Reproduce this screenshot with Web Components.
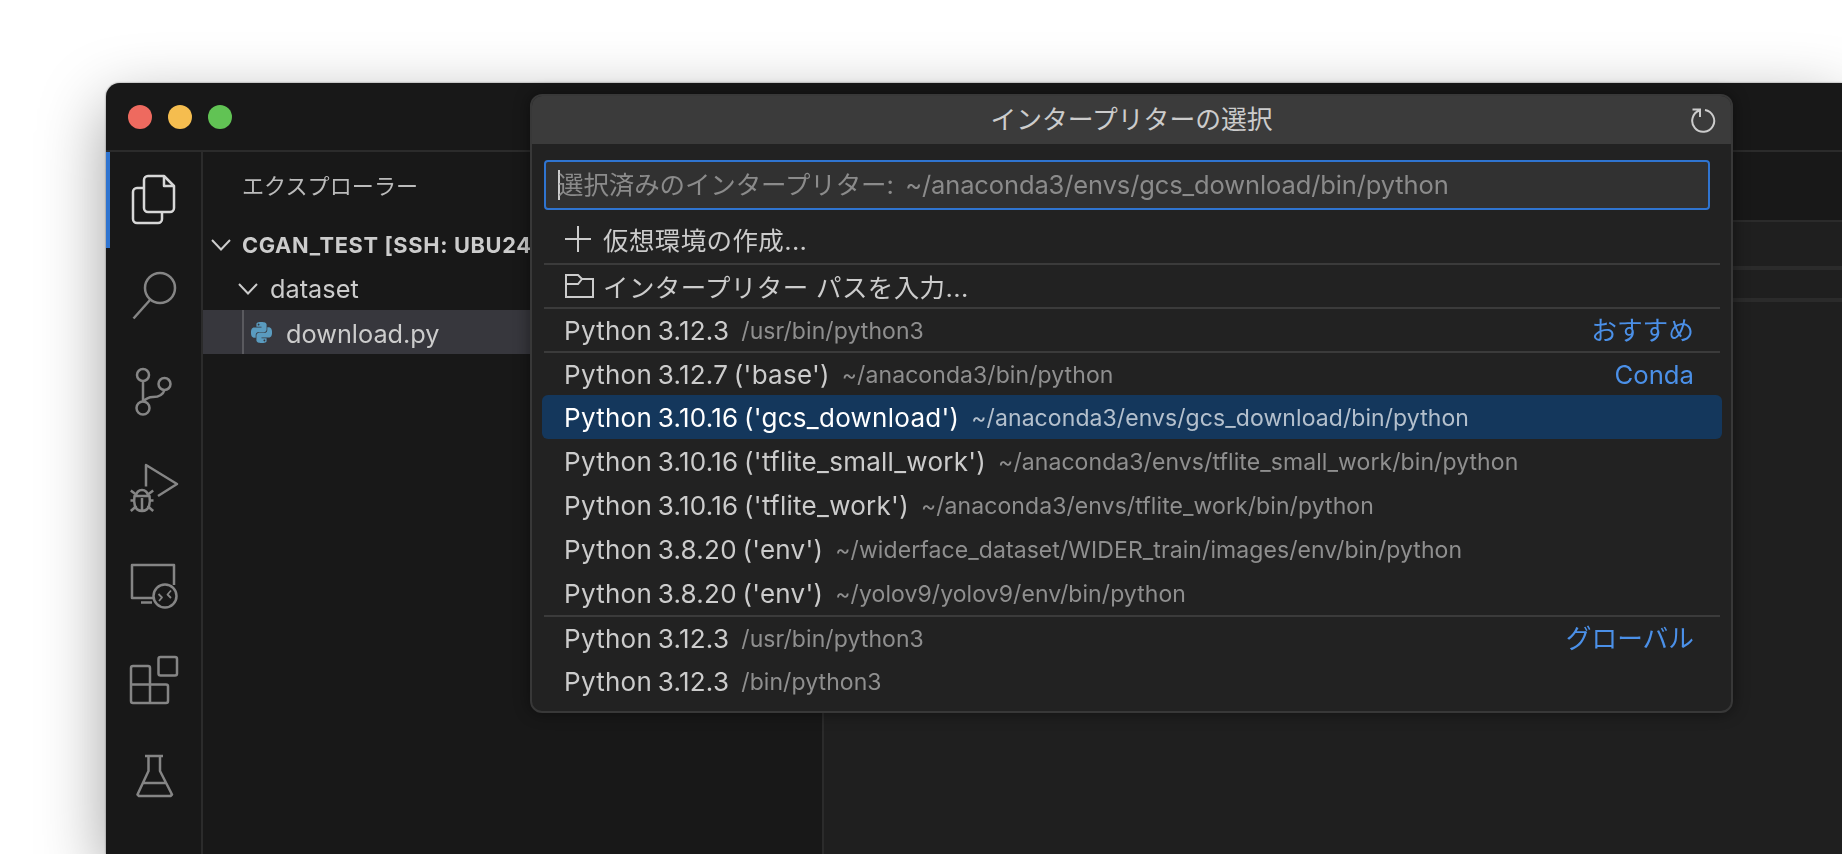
<!DOCTYPE html>
<html lang="ja">
<head>
<meta charset="utf-8">
<title>Python interpreter</title>
<style>
html,body{margin:0;height:100%;background:#fff;overflow:hidden}
body{font-family:Inter,"Noto Sans CJK JP",sans-serif;padding:83px 0 0 106px;box-sizing:border-box;color:#ccc}
</style>
</head>
<body>
<vs-window>
  <traffic-lights slot="title"></traffic-lights>
  <activity-bar slot="activity">
    <activity-item active><svg viewBox="0 0 96 96"><path d="M38 36H31a4 4 0 0 0-4 4V67a4 4 0 0 0 4 4H52a4 4 0 0 0 4-4V60"/><path d="M42 24H58L68 34V56a4 4 0 0 1-4 4H42a4 4 0 0 1-4-4V28a4 4 0 0 1 4-4Z"/><path d="M58 24V34H68"/></svg></activity-item>
    <activity-item><svg viewBox="0 0 96 96"><circle cx="54" cy="40" r="15"/><path d="M44 52 27.500 70.500"/></svg></activity-item>
    <activity-item><svg viewBox="0 0 96 96"><circle cx="37" cy="31" r="6"/><circle cx="58.500" cy="40" r="6"/><circle cx="37" cy="64" r="6.500"/><path d="M37 37V57.500M37 58C40 54 43 53 47 53 52.500 53 57 51 58.500 46"/></svg></activity-item>
    <activity-item><svg viewBox="0 0 96 96"><path d="M40 46.500V25L71 44 52 56"/><path d="M30 56a6 6 0 0 1 12 0M28.500 56H43.500C44.500 62 44 71 36 71S27.500 62 28.500 56ZM36 58V70"/><path d="M30 54.500 24.800 50.500M42 54.500 47.200 50.500M24.500 60.500H28.500M43.500 60.500H47.500M30.500 66 24.800 71M41.500 66 47.200 71"/></svg></activity-item>
    <activity-item><svg viewBox="0 0 96 96"><path d="M68 49V29H26V62H47M35 66.500H46"/><circle cx="59" cy="60" r="11.500"/><path d="M52.500 58 56 61.500 53 65M65 54.500 61.500 58.500 65 62" stroke-width="1.800"/></svg></activity-item>
    <activity-item><svg viewBox="0 0 96 96"><rect x="52.500" y="25" width="18.500" height="18.500" rx="2"/><path d="M27 34H42A2 2 0 0 1 44 36V71H27A2 2 0 0 1 25 69V36A2 2 0 0 1 27 34ZM25 52.500H60A2 2 0 0 1 62 54.500V69A2 2 0 0 1 60 71H44"/></svg></activity-item>
    <activity-item><svg viewBox="0 0 96 96"><path d="M39 28H57M42.500 28V43L31.500 66.500 33 68H64.500L66 66.500 54 43V28M36 55H60.500"/></svg></activity-item>
  </activity-bar>
  <explorer-side slot="side">
    <tree-row kind="head">エクスプローラー</tree-row>
    <tree-row kind="root"><chev-icon slot="lead"></chev-icon>CGAN_TEST [SSH: UBU24]</tree-row>
    <tree-row kind="folder"><chev-icon slot="lead"></chev-icon>dataset</tree-row>
    <tree-row kind="file" selected><python-icon slot="lead"></python-icon>download.py</tree-row>
  </explorer-side>
  <editor-area slot="editor"></editor-area>
  <quick-pick slot="overlay">
    <span slot="title">インタープリターの選択</span>
    <span slot="placeholder">選択済みのインタープリター: ~/anaconda3/envs/gcs_download/bin/python</span>
    <pick-row cjk lift><svg slot="icon" width="26" height="26" viewBox="0 0 26 26" fill="none" stroke="#ccc" stroke-width="2"><path d="M13 0V26M0 13H26"/></svg>仮想環境の作成...</pick-row>
    <pick-row cjk sep><svg slot="icon" class="folder" width="29" height="24" viewBox="0 0 29 24" fill="none" stroke="#ccc" stroke-width="2"><path d="M1 23V1H13L17 5H28V23ZM1 10H13L17 5"/></svg>インタープリター パスを入力...</pick-row>
    <pick-row sep>Python 3.12.3<span slot="desc">/usr/bin/python3</span><span slot="tag" class="cjk">おすすめ</span></pick-row>
    <pick-row sep>Python 3.12.7 ('base')<span slot="desc">~/anaconda3/bin/python</span><span slot="tag">Conda</span></pick-row>
    <pick-row selected>Python 3.10.16 ('gcs_download')<span slot="desc">~/anaconda3/envs/gcs_download/bin/python</span></pick-row>
    <pick-row>Python 3.10.16 ('tflite_small_work')<span slot="desc">~/anaconda3/envs/tflite_small_work/bin/python</span></pick-row>
    <pick-row>Python 3.10.16 ('tflite_work')<span slot="desc">~/anaconda3/envs/tflite_work/bin/python</span></pick-row>
    <pick-row>Python 3.8.20 ('env')<span slot="desc">~/widerface_dataset/WIDER_train/images/env/bin/python</span></pick-row>
    <pick-row>Python 3.8.20 ('env')<span slot="desc">~/yolov9/yolov9/env/bin/python</span></pick-row>
    <pick-row sep>Python 3.12.3<span slot="desc">/usr/bin/python3</span><span slot="tag" class="cjk">グローバル</span></pick-row>
    <pick-row>Python 3.12.3<span slot="desc">/bin/python3</span></pick-row>
  </quick-pick>
</vs-window>
<script>
function def(name, css, html){
  customElements.define(name, class extends HTMLElement{
    constructor(){super();this.attachShadow({mode:'open'}).innerHTML='<style>'+css+'</style>'+html;}
  });
}
def('vs-window',`
  :host{display:flex;flex-direction:column;position:relative;height:calc(100vh - 83px);background:#181818;border-top-left-radius:14px;
    box-shadow:0 22px 66px rgba(0,0,0,.38),0 0 2px rgba(0,0,0,.55);filter:blur(.4px)}
  .title{height:67px;flex:none;display:flex;align-items:center;padding-left:22px;border-bottom:2px solid #2b2b2b;border-top-left-radius:14px}
  .main{flex:1;display:flex;min-height:0}
`,`<div class="title"><slot name="title"></slot></div>
<div class="main"><slot name="activity"></slot><slot name="side"></slot><slot name="editor"></slot></div><slot name="overlay"></slot>`);

def('traffic-lights',`
  :host{display:flex;gap:16px}
  i{width:24px;height:24px;border-radius:50%;display:block}
`,`<i style="background:#ee6a5f"></i><i style="background:#f5bd4f"></i><i style="background:#61c354"></i>`);

def('activity-bar',`
  :host{display:flex;flex-direction:column;width:95px;flex:none;border-right:2px solid #2b2b2b}
`,`<slot></slot>`);

def('activity-item',`
  :host{display:block;height:96px;flex:none;position:relative;box-sizing:border-box}
  :host([active]){border-left:4px solid #2f74d0;}
  ::slotted(svg){display:block;width:96px;height:96px;fill:none;stroke:#858585;stroke-width:2.500;stroke-linejoin:round;stroke-linecap:butt}
  :host([active]) ::slotted(svg){stroke:#d7d7d7;margin-left:-4px}
`,`<slot></slot>`);

def('explorer-side',`
  :host{display:flex;flex-direction:column;width:619px;flex:none;border-right:2px solid #2b2b2b}
`,`<slot></slot>`);

def('tree-row',`
  :host{display:flex;align-items:center;white-space:nowrap;overflow:hidden;position:relative;box-sizing:border-box;height:44px;color:#ccc;font-size:25.300px}
  :host([kind=head]){height:68px;padding:0 0 4px 28px;font-size:22.100px;color:#bbb}
  :host([kind=root]){font-weight:700;font-size:21.800px;letter-spacing:.65px;padding-left:8px;height:46px;margin-top:2px}
  :host([kind=root]) .lead{margin-right:11px}
  :host([kind=folder]){padding:0 0 2px 35px;height:42px}
  :host([kind=file]){padding:2px 0 0 47px}
  :host([selected]){background:#37373d}
  :host([kind=file])::before{content:"";position:absolute;left:39px;top:0;bottom:0;width:2px;background:#5a5a5f}
  .lead{display:flex;margin-right:11px}
  :host([kind=folder]) .lead{margin:2px 12px 0 0}
  :host([kind=file]) .lead{margin:-2px 14px 0 1px}
`,`<span class="lead"><slot name="lead"></slot></span><slot></slot>`);

def('chev-icon',`:host{display:block;width:20px;height:12px}svg{display:block;fill:none;stroke:#ccc;stroke-width:2}`,
  `<svg width="20" height="12" viewBox="0 0 20 12"><path d="M1 1 10 10.500 19 1"/></svg>`);

def('python-icon',`:host{display:block;width:21px;height:21px}svg{display:block;fill:#5a9bbf}`,
  `<svg width="21" height="21" viewBox="0 0 24 24"><path d="M14.25.18l.9.2.73.26.59.3.45.32.34.34.25.34.16.33.1.3.04.26.02.2-.01.13V8.5l-.05.63-.13.55-.21.46-.26.38-.3.31-.33.25-.35.19-.35.14-.33.1-.3.07-.26.04-.21.02H8.77l-.69.05-.59.14-.5.22-.41.27-.33.32-.27.35-.2.36-.15.37-.1.35-.07.32-.04.27-.02.21v3.06H3.17l-.21-.03-.28-.07-.32-.12-.35-.18-.36-.26-.36-.36-.35-.46-.32-.59-.28-.73-.21-.88-.14-1.05-.05-1.23.06-1.22.16-1.04.24-.87.32-.71.36-.57.4-.44.42-.33.42-.24.4-.16.36-.1.32-.05.24-.01h.16l.06.01h8.16v-.83H6.18l-.01-2.75-.02-.37.05-.34.11-.31.17-.28.25-.26.31-.23.38-.2.44-.18.51-.15.58-.12.64-.1.71-.06.77-.04.84-.02 1.27.05zm-6.3 1.98l-.23.33-.08.41.08.41.23.34.33.22.41.09.41-.09.33-.22.23-.34.08-.41-.08-.41-.23-.33-.33-.22-.41-.09-.41.09zm13.09 3.95l.28.06.32.12.35.18.36.27.36.35.35.47.32.59.28.73.21.88.14 1.04.05 1.23-.06 1.23-.16 1.04-.24.86-.32.71-.36.57-.4.45-.42.33-.42.24-.4.16-.36.09-.32.05-.24.02-.16-.01h-8.22v.82h5.84l.01 2.76.02.36-.05.34-.11.31-.17.29-.25.25-.31.24-.38.2-.44.17-.51.15-.58.13-.64.09-.71.07-.77.04-.84.01-1.27-.04-1.07-.14-.9-.2-.73-.25-.59-.3-.45-.33-.34-.34-.25-.34-.16-.33-.1-.3-.04-.25-.02-.2.01-.13v-5.34l.05-.64.13-.54.21-.46.26-.38.3-.32.33-.24.35-.2.35-.14.33-.1.3-.06.26-.04.21-.02.13-.01h5.84l.69-.05.59-.14.5-.21.41-.28.33-.32.27-.35.2-.36.15-.36.1-.35.07-.32.04-.28.02-.21V6.07h2.09l.14.01zm-6.47 14.25l-.23.33-.08.41.08.41.23.33.33.23.41.08.41-.08.33-.23.23-.33.08-.41-.08-.41-.23-.33-.33-.23-.41-.08-.41.08z"/></svg>`);

def('editor-area',`
  :host{display:flex;flex-direction:column;flex:1;background:#1f1f1f;min-width:0}
  .tabs{height:68px;background:#181818;border-bottom:2px solid #2b2b2b;flex:none}
  .crumb{height:44px;flex:none;border-bottom:4px solid #2b2b2b}
  .sticky{height:28px;flex:none;border-bottom:4px solid #2b2b2b}
`,`<div class="tabs"></div><div class="crumb"></div><div class="sticky"></div>`);

def('quick-pick',`
  :host{position:absolute;left:424px;top:11px;width:1203px;box-sizing:border-box;background:#222;border:2px solid #383838;border-radius:12px;
    box-shadow:0 0 16px rgba(0,0,0,.45);display:block;overflow:hidden;padding-bottom:8.500px}
  .head{height:48px;background:#3b3b3b;display:grid;grid-template-columns:1fr auto 1fr;align-items:center;font-size:25.800px;color:#ccc;padding:0 14px}
  .head svg{justify-self:end;display:block}
  .title{grid-column:2;display:block;padding-bottom:6px}
  .input{margin:16px 21px 8.500px 12px;height:50px;box-sizing:border-box;background:#313131;border:2px solid #2f74d0;border-radius:4px;display:flex;align-items:center;padding-left:12px;font-size:25.500px;letter-spacing:-.12px;word-spacing:4.500px;color:#8b8b8b;white-space:nowrap}
  .ph{display:block;padding-bottom:5px}
  .caret{width:2px;height:30px;background:#ccc;margin-right:-2px;flex:none}
  .list{margin:0 9px 0 10px}
`,`<div class="head"><span class="title"><slot name="title"></slot></span>
<svg width="26" height="26" viewBox="0 0 26 26" fill="none" stroke="#ccc" stroke-width="2"><path d="M1.500 2.500H9V10M8.500 3.500A11 11 0 1 0 14 3"/></svg></div>
<div class="input"><i class="caret"></i><span class="ph"><slot name="placeholder"></slot></span></div>
<div class="list"><slot></slot></div>`);

def('pick-row',`
  :host{display:flex;align-items:center;height:44px;box-sizing:border-box;padding:2px 28px 0 22px;border-radius:6px;font-size:26px;letter-spacing:.27px;word-spacing:-2px;color:#ccc;white-space:nowrap;position:relative}
  :host([cjk]){font-size:25.500px;letter-spacing:.38px;word-spacing:0;padding-top:0}
  :host([sep]){border-top:2px solid #3b3b3b;border-radius:0;margin-left:2px;padding-left:20px;margin-right:2px;padding-right:26px}
  :host([selected]){background:#14375c;color:#fff}
  :host([lift]){padding-bottom:4px}
  .icon{display:flex}
  ::slotted(svg){margin:0 12px 0 1px}
  ::slotted(svg.folder){margin:0 9px 0 1px}
  .desc{font-size:23px;letter-spacing:.08px;color:#8f8f8f;margin-left:12px}
  :host([selected]) .desc{color:#b4c0cd}
  .tag{margin-left:auto;color:#4b90e8;font-size:25.700px;letter-spacing:0}
  ::slotted(.cjk){display:block;padding-bottom:4px}
`,`<span class="icon"><slot name="icon"></slot></span><slot></slot><span class="desc"><slot name="desc"></slot></span><span class="tag"><slot name="tag"></slot></span>`);
</script>
</body>
</html>
